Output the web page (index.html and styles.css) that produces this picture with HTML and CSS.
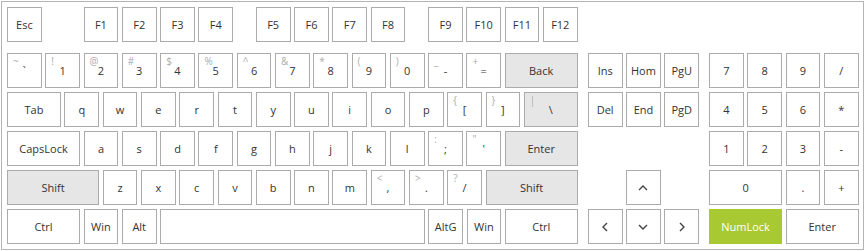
FILE: index.html
```html
<!DOCTYPE html>
<html lang="en">
<head>
    <meta charset="UTF-8">
    <meta name="viewport" content="width=device-width, initial-scale=1.0">
    <title>On-Screen Keyboard</title>
    <link rel="stylesheet" href="styles.css">
</head>
<body>
    <div class="keyboard">
        <div class="row fn-row">
            <div class="key">Esc</div>
            <div class="space"></div>
            <div class="key">F1</div>
            <div class="key">F2</div>
            <div class="key">F3</div>
            <div class="key">F4</div>
            <div class="space half"></div>
            <div class="key">F5</div>
            <div class="key">F6</div>
            <div class="key">F7</div>
            <div class="key">F8</div>
            <div class="space half"></div>
            <div class="key">F9</div>
            <div class="key">F10</div>
            <div class="key">F11</div>
            <div class="key">F12</div>
        </div>

        <div class="blocks">
            <!-- main block -->
            <div class="block main">
                <div class="row">
                    <div class="key"><span class="alt">~</span>`</div>
                    <div class="key"><span class="alt">!</span>1</div>
                    <div class="key"><span class="alt">@</span>2</div>
                    <div class="key"><span class="alt">#</span>3</div>
                    <div class="key"><span class="alt">$</span>4</div>
                    <div class="key"><span class="alt">%</span>5</div>
                    <div class="key"><span class="alt">^</span>6</div>
                    <div class="key"><span class="alt">&amp;</span>7</div>
                    <div class="key"><span class="alt">*</span>8</div>
                    <div class="key"><span class="alt">(</span>9</div>
                    <div class="key"><span class="alt">)</span>0</div>
                    <div class="key"><span class="alt">_</span>-</div>
                    <div class="key"><span class="alt">+</span>=</div>
                    <div class="key w2 gray">Back</div>
                </div>
                <div class="row">
                    <div class="key w15">Tab</div>
                    <div class="key">q</div>
                    <div class="key">w</div>
                    <div class="key">e</div>
                    <div class="key">r</div>
                    <div class="key">t</div>
                    <div class="key">y</div>
                    <div class="key">u</div>
                    <div class="key">i</div>
                    <div class="key">o</div>
                    <div class="key">p</div>
                    <div class="key"><span class="alt">{</span>[</div>
                    <div class="key"><span class="alt">}</span>]</div>
                    <div class="key w15 gray"><span class="alt">|</span>\</div>
                </div>
                <div class="row">
                    <div class="key w2">CapsLock</div>
                    <div class="key">a</div>
                    <div class="key">s</div>
                    <div class="key">d</div>
                    <div class="key">f</div>
                    <div class="key">g</div>
                    <div class="key">h</div>
                    <div class="key">j</div>
                    <div class="key">k</div>
                    <div class="key">l</div>
                    <div class="key"><span class="alt">:</span>;</div>
                    <div class="key"><span class="alt">"</span>'</div>
                    <div class="key w2 gray">Enter</div>
                </div>
                <div class="row">
                    <div class="key w25 gray">Shift</div>
                    <div class="key">z</div>
                    <div class="key">x</div>
                    <div class="key">c</div>
                    <div class="key">v</div>
                    <div class="key">b</div>
                    <div class="key">n</div>
                    <div class="key">m</div>
                    <div class="key"><span class="alt">&lt;</span>,</div>
                    <div class="key"><span class="alt">&gt;</span>.</div>
                    <div class="key"><span class="alt">?</span>/</div>
                    <div class="key w25 gray">Shift</div>
                </div>
                <div class="row">
                    <div class="key w2">Ctrl</div>
                    <div class="key">Win</div>
                    <div class="key">Alt</div>
                    <div class="key w7"></div>
                    <div class="key">AltG</div>
                    <div class="key">Win</div>
                    <div class="key w2">Ctrl</div>
                </div>
            </div>

            <!-- navigation block -->
            <div class="block nav">
                <div class="row">
                    <div class="key">Ins</div>
                    <div class="key">Hom</div>
                    <div class="key">PgU</div>
                </div>
                <div class="row">
                    <div class="key">Del</div>
                    <div class="key">End</div>
                    <div class="key">PgD</div>
                </div>
                <div class="row"></div>
                <div class="row">
                    <div class="space"></div>
                    <div class="key">
                        <svg width="10" height="6" viewBox="0 0 10 6"><polyline points="1,5 5,1 9,5"/></svg>
                    </div>
                </div>
                <div class="row">
                    <div class="key">
                        <svg width="6" height="10" viewBox="0 0 6 10"><polyline points="5,1 1,5 5,9"/></svg>
                    </div>
                    <div class="key">
                        <svg width="10" height="6" viewBox="0 0 10 6"><polyline points="1,1 5,5 9,1"/></svg>
                    </div>
                    <div class="key">
                        <svg width="6" height="10" viewBox="0 0 6 10"><polyline points="1,1 5,5 1,9"/></svg>
                    </div>
                </div>
            </div>

            <!-- numeric keypad -->
            <div class="block numpad">
                <div class="row">
                    <div class="key">7</div>
                    <div class="key">8</div>
                    <div class="key">9</div>
                    <div class="key">/</div>
                </div>
                <div class="row">
                    <div class="key">4</div>
                    <div class="key">5</div>
                    <div class="key">6</div>
                    <div class="key">*</div>
                </div>
                <div class="row">
                    <div class="key">1</div>
                    <div class="key">2</div>
                    <div class="key">3</div>
                    <div class="key">-</div>
                </div>
                <div class="row">
                    <div class="key w2">0</div>
                    <div class="key">.</div>
                    <div class="key">+</div>
                </div>
                <div class="row">
                    <div class="key w2 active">NumLock</div>
                    <div class="key w2">Enter</div>
                </div>
            </div>
        </div>
    </div>
</body>
</html>
```

FILE: styles.css
```css
* {
    margin: 0;
    padding: 0;
    box-sizing: border-box;
}

body {
    background-color: #fff;
    font-family: "Open Sans", "Noto Sans", Arial, sans-serif;
    font-size: 11px;
    color: #333;
}

.keyboard {
    --u: 38.3px;
    --g: 3.6px;
    width: 863px;
    height: 249px;
    margin: 1px;
    padding: 5px;
    border: 1px solid #b4b4b4;
}

.row {
    display: flex;
    gap: var(--g);
    height: 34.6px;
    margin-bottom: 4.4px;
}

.fn-row {
    margin-bottom: 11.7px;
}

.blocks {
    display: flex;
    gap: 10px;
}

.block {
    display: flex;
    flex-direction: column;
}

.key {
    position: relative;
    width: calc(var(--u) - var(--g));
    height: 100%;
    border: 1px solid #ababab;
    background-color: #fff;
    display: flex;
    align-items: center;
    justify-content: center;
    white-space: nowrap;
}

.space {
    width: calc(var(--u) - var(--g));
}

.space.half {
    width: calc(var(--u) / 2 - var(--g));
}

.key.w15 {
    width: calc(var(--u) * 1.5 - var(--g));
}

.key.w2 {
    width: calc(var(--u) * 2 - var(--g));
}

.key.w25 {
    width: calc(var(--u) * 2.5 - var(--g));
}

.key.w7 {
    width: calc(var(--u) * 7 - var(--g));
}

.key.gray {
    background-color: #e6e6e6;
}

.key.active {
    background-color: #a8c932;
    border-color: #a8c932;
    color: #fff;
}

/* shifted symbol in the corner */
.key .alt {
    position: absolute;
    top: 1px;
    left: 5px;
    font-size: 10px;
    line-height: 13px;
    color: #acacac;
}

.key svg polyline {
    fill: none;
    stroke: #444;
    stroke-width: 1.4;
}
```
